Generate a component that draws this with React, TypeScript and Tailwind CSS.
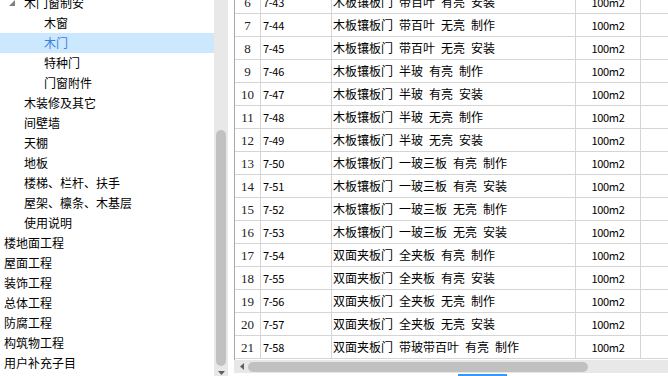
const tree: { label: string; level: number; expander?: boolean; selected?: boolean }[] = [
  { label: "木门窗制安", level: 1, expander: true },
  { label: "木窗", level: 2 },
  { label: "木门", level: 2, selected: true },
  { label: "特种门", level: 2 },
  { label: "门窗附件", level: 2 },
  { label: "木装修及其它", level: 1 },
  { label: "间壁墙", level: 1 },
  { label: "天棚", level: 1 },
  { label: "地板", level: 1 },
  { label: "楼梯、栏杆、扶手", level: 1 },
  { label: "屋架、檩条、木基层", level: 1 },
  { label: "使用说明", level: 1 },
  { label: "楼地面工程", level: 0 },
  { label: "屋面工程", level: 0 },
  { label: "装饰工程", level: 0 },
  { label: "总体工程", level: 0 },
  { label: "防腐工程", level: 0 },
  { label: "构筑物工程", level: 0 },
  { label: "用户补充子目", level: 0 },
];

const rows: [number, string, string][] = [
  [6, "7-43", "木板镶板门 带百叶 有亮 安装"],
  [7, "7-44", "木板镶板门 带百叶 无亮 制作"],
  [8, "7-45", "木板镶板门 带百叶 无亮 安装"],
  [9, "7-46", "木板镶板门 半玻 有亮 制作"],
  [10, "7-47", "木板镶板门 半玻 有亮 安装"],
  [11, "7-48", "木板镶板门 半玻 无亮 制作"],
  [12, "7-49", "木板镶板门 半玻 无亮 安装"],
  [13, "7-50", "木板镶板门 一玻三板 有亮 制作"],
  [14, "7-51", "木板镶板门 一玻三板 有亮 安装"],
  [15, "7-52", "木板镶板门 一玻三板 无亮 制作"],
  [16, "7-53", "木板镶板门 一玻三板 无亮 安装"],
  [17, "7-54", "双面夹板门 全夹板 有亮 制作"],
  [18, "7-55", "双面夹板门 全夹板 有亮 安装"],
  [19, "7-56", "双面夹板门 全夹板 无亮 制作"],
  [20, "7-57", "双面夹板门 全夹板 无亮 安装"],
  [21, "7-58", "双面夹板门 带玻带百叶 有亮 制作"],
];

const indent = ["pl-[4px]", "pl-[24px]", "pl-[44px]"];

function TreePanel() {
  return (
    <div className="flex h-[376px] w-[214px] flex-col overflow-hidden bg-white">
      <div className="mt-[-7px] flex flex-col">
        {tree.map((t) => (
          <div
            key={t.label}
            className={`relative flex h-[20px] items-center whitespace-nowrap ${indent[t.level]} ${
              t.selected ? "bg-[#cce8ff] text-[#3a80e0]" : "text-black"
            }`}
          >
            {t.expander && (
              <svg className="absolute left-[9px] top-[7px]" width="6" height="6" viewBox="0 0 6 6">
                <polygon points="6,0 6,6 0,6" fill="#808080" />
              </svg>
            )}
            {t.label}
          </div>
        ))}
      </div>
    </div>
  );
}

function VScroll() {
  return (
    <div className="relative flex h-[376px] w-[14px] flex-col bg-[#e8e8e8]">
      <div className="ml-[2px] mt-[130px] h-[236px] w-[10px] rounded-full bg-[#c1c1c1]" />
      <svg className="absolute bottom-[1px] left-[4px]" width="7" height="4" viewBox="0 0 7 4">
        <polygon points="0,0 7,0 3.5,4" fill="#606060" />
      </svg>
    </div>
  );
}

function Grid() {
  return (
    <div className="flex h-[376px] flex-1 flex-col overflow-hidden bg-white">
      <div className="h-[360px] overflow-hidden border-l border-[#a9a9a9]">
        <div className="mt-[-9px] flex flex-col">
          {rows.map(([n, code, name]) => (
            <div key={n} className="flex h-[23px] border-b border-[#d5d5d5] text-black">
              <div
                className="flex w-[26px] shrink-0 items-center justify-center border-r border-[#d5d5d5] text-[13px] text-[#222]"
                style={{ fontFamily: '"Liberation Serif", serif' }}
              >
                {n}
              </div>
              <div className="flex w-[71px] shrink-0 items-center border-r border-[#d5d5d5] pl-[2px] text-[11px] tracking-[-0.3px]">
                {code}
              </div>
              <div className="flex w-[244px] shrink-0 items-center gap-[6px] whitespace-nowrap border-r border-[#d5d5d5] pl-[1px]">
                {name.split(" ").map((w, i) => (
                  <span key={i}>{w}</span>
                ))}
              </div>
              <div className="flex w-[65px] shrink-0 items-center justify-center border-r border-[#d5d5d5] text-[11px] tracking-[-0.3px]">
                100m2
              </div>
              <div className="flex-1" />
            </div>
          ))}
        </div>
      </div>
      <div className="relative flex h-[13px] items-center bg-[#e8e8e8] pl-[14px]">
        <svg className="absolute left-[6px] top-[3px]" width="4" height="7" viewBox="0 0 4 7">
          <polygon points="4,0 4,7 0,3.5" fill="#606060" />
        </svg>
        <div className="h-[10px] w-[340px] rounded-full bg-[#c1c1c1]" />
      </div>
      <div className="h-[3px] pl-[224px]">
        <div className="mt-[1px] h-[2px] w-[49px] bg-[#3399ff]" />
      </div>
    </div>
  );
}

export default function App() {
  return (
    <div
      className="flex h-[376px] w-[668px] overflow-hidden bg-white text-[12px] leading-none"
      style={{ fontFamily: '"Noto Sans CJK SC", "Noto Sans", sans-serif' }}
    >
      <TreePanel />
      <VScroll />
      <div className="w-[6px] bg-white" />
      <Grid />
    </div>
  );
}
